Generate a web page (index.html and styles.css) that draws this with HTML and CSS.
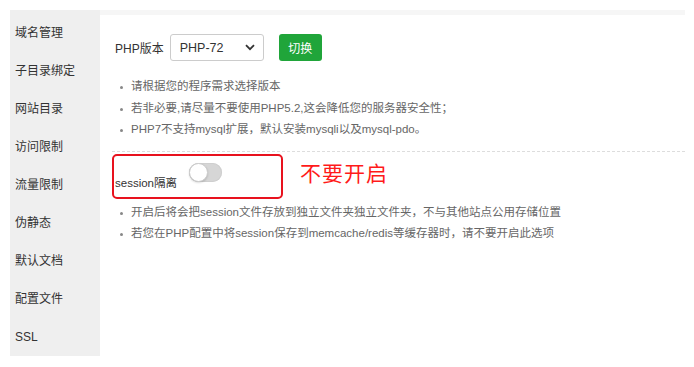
FILE: index.html
```html
<!DOCTYPE html>
<html>
<head>
    <meta charset="UTF-8">
    <title>网站设置</title>
    <link rel="stylesheet" href="styles.css">
</head>
<body>
    <div class="panel">
        <div class="sidebar">
            <div class="side-item">域名管理</div>
            <div class="side-item">子目录绑定</div>
            <div class="side-item">网站目录</div>
            <div class="side-item">访问限制</div>
            <div class="side-item">流量限制</div>
            <div class="side-item">伪静态</div>
            <div class="side-item">默认文档</div>
            <div class="side-item">配置文件</div>
            <div class="side-item">SSL</div>
        </div>

        <div class="content">
            <div class="php-row">
                <span class="php-label">PHP版本</span>
                <div class="select">
                    <span>PHP-72</span>
                    <svg width="10" height="7" viewBox="0 0 10 7"><path d="M1 1.2 L5 5.2 L9 1.2" fill="none" stroke="#333" stroke-width="1.8"/></svg>
                </div>
                <button class="btn-switch">切换</button>
            </div>

            <ul class="tips">
                <li>请根据您的程序需求选择版本</li>
                <li>若非必要,请尽量不要使用PHP5.2,这会降低您的服务器安全性；</li>
                <li>PHP7不支持mysql扩展，默认安装mysqli以及mysql-pdo。</li>
            </ul>

            <div class="divider"></div>

            <div class="session-row">
                <div class="session-box">
                    <span class="session-label">session隔离</span>
                    <span class="toggle"><span class="knob"></span></span>
                </div>
                <span class="warn">不要开启</span>
            </div>

            <ul class="tips tips-session">
                <li>开启后将会把session文件存放到独立文件夹独立文件夹，不与其他站点公用存储位置</li>
                <li>若您在PHP配置中将session保存到memcache/redis等缓存器时，请不要开启此选项</li>
            </ul>
        </div>
    </div>
</body>
</html>
```

FILE: styles.css
```css
body {
    margin: 0;
    background: #fff;
    font-family: "Liberation Sans", "Noto Sans CJK SC", sans-serif;
    color: #333;
    font-size: 12px;
}

.panel {
    display: flex;
    margin: 10px 9px 0 10px;
}

.sidebar {
    width: 90px;
    flex-shrink: 0;
    background: #efefef;
    padding-top: 4px;
}

.side-item {
    height: 38px;
    line-height: 38px;
    padding-left: 5px;
    font-size: 12px;
    color: #333;
}

.content {
    flex: 1;
    border-top: 5px solid #f6f6f6;
    padding-left: 12px;
}

.php-row {
    display: flex;
    align-items: center;
    margin-top: 19px;
    padding-left: 3px;
}

.php-label {
    font-size: 12px;
    margin-right: 6px;
}

.select {
    box-sizing: border-box;
    width: 94px;
    height: 27px;
    border: 1px solid #ccc;
    border-radius: 3px;
    display: flex;
    align-items: center;
    justify-content: space-between;
    padding: 0 8px 0 9px;
    font-size: 12.5px;
    color: #333;
}

.btn-switch {
    margin-left: 15px;
    width: 43px;
    height: 27px;
    border: none;
    border-radius: 3px;
    background: #20a53a;
    color: #fff;
    font-family: inherit;
    font-size: 12px;
    padding: 0;
}

.tips {
    list-style: none;
    margin: 15px 0 0 0;
    padding: 0 0 0 8px;
}

.tips li {
    position: relative;
    line-height: 21.5px;
    padding-left: 11px;
    color: #666;
    font-size: 11.5px;
}

.tips li::before {
    content: "";
    position: absolute;
    left: 0;
    top: 10px;
    width: 3px;
    height: 3px;
    border-radius: 50%;
    background: #888;
}

.divider {
    margin-top: 10px;
    border-top: 1px dashed #ddd;
}

.session-row {
    display: flex;
    align-items: flex-start;
    margin-top: 2px;
}

.session-box {
    box-sizing: border-box;
    width: 171px;
    height: 45px;
    border: 2px solid #e8121e;
    border-radius: 5px;
    display: flex;
    align-items: flex-start;
    padding: 7px 0 0 1px;
}

.session-label {
    margin-top: 11px;
    font-size: 11.5px;
    color: #333;
}

.toggle {
    position: relative;
    margin-left: 12px;
    width: 33px;
    height: 19px;
    border-radius: 10px;
    background: #d6d6d6;
    box-shadow: inset 0 0 0 1px #cfcfcf;
}

.knob {
    position: absolute;
    left: 0;
    top: 0;
    width: 19px;
    height: 19px;
    box-sizing: border-box;
    border-radius: 50%;
    background: #fff;
    border: 1px solid #ccc;
    box-shadow: 0 1px 2px rgba(0, 0, 0, 0.15);
}

.warn {
    margin: 3px 0 0 17px;
    font-size: 21px;
    color: #ff1a1a;
    letter-spacing: 1px;
}

.tips-session {
    margin-top: 3px;
}
```
